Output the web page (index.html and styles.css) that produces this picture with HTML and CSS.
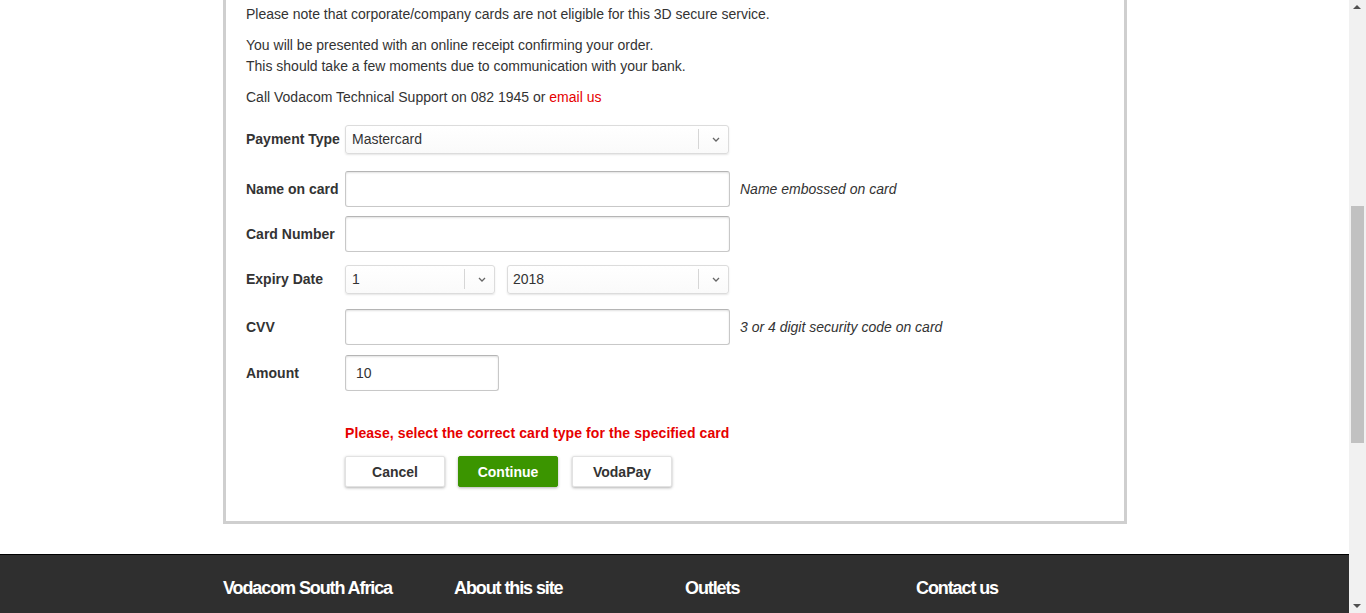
FILE: index.html
```html
<!DOCTYPE html>
<html lang="en">
<head>
<meta charset="utf-8">
<title>Vodacom payment</title>
<link rel="stylesheet" href="styles.css">
</head>
<body>
<div class="viewport">
  <div class="page">
    <div class="panel">
      <p>Please note that corporate/company cards are not eligible for this 3D secure service.</p>
      <p>You will be presented with an online receipt confirming your order.<br>This should take a few moments due to communication with your bank.</p>
      <p>Call Vodacom Technical Support on 082 1945 or <a class="link" href="#">email us</a></p>

      <form class="form">
        <div class="row row-payment">
          <label class="label">Payment Type</label>
          <div class="select select-wide">
            <span class="select-text">Mastercard</span>
            <span class="select-sep"></span>
            <svg class="chev" width="8" height="5" viewBox="0 0 8 5"><polyline points="1,1 4,4 7,1" fill="none" stroke="#666" stroke-width="1.3"/></svg>
          </div>
        </div>
        <div class="row row-tight">
          <label class="label">Name on card</label>
          <div class="input input-wide"></div>
          <span class="hint">Name embossed on card</span>
        </div>
        <div class="row row-tight">
          <label class="label">Card Number</label>
          <div class="input input-wide"></div>
        </div>
        <div class="row row-expiry">
          <label class="label">Expiry Date</label>
          <div class="select select-month">
            <span class="select-text">1</span>
            <span class="select-sep"></span>
            <svg class="chev" width="8" height="5" viewBox="0 0 8 5"><polyline points="1,1 4,4 7,1" fill="none" stroke="#666" stroke-width="1.3"/></svg>
          </div>
          <div class="select select-year">
            <span class="select-text select-text-year">2018</span>
            <span class="select-sep"></span>
            <svg class="chev" width="8" height="5" viewBox="0 0 8 5"><polyline points="1,1 4,4 7,1" fill="none" stroke="#666" stroke-width="1.3"/></svg>
          </div>
        </div>
        <div class="row">
          <label class="label">CVV</label>
          <div class="input input-wide"></div>
          <span class="hint">3 or 4 digit security code on card</span>
        </div>
        <div class="row">
          <label class="label">Amount</label>
          <div class="input input-amount">10</div>
        </div>

        <div class="error">Please, select the correct card type for the specified card</div>

        <div class="buttons">
          <button type="button" class="btn">Cancel</button>
          <button type="button" class="btn btn-primary">Continue</button>
          <button type="button" class="btn btn-last">VodaPay</button>
        </div>
      </form>
    </div>

    <footer class="footer">
      <div class="footer-inner">
        <h3 class="footer-title">Vodacom South Africa</h3>
        <h3 class="footer-title">About this site</h3>
        <h3 class="footer-title">Outlets</h3>
        <h3 class="footer-title">Contact us</h3>
      </div>
    </footer>
  </div>

  <div class="scrollbar">
    <div class="sb-arrow sb-up"></div>
    <div class="sb-track"><div class="sb-thumb"></div></div>
    <div class="sb-arrow sb-down"></div>
  </div>
</div>
</body>
</html>
```

FILE: styles.css
```css
* { box-sizing: border-box; }

html, body {
  margin: 0;
  padding: 0;
  height: 613px;
  overflow: hidden;
  background: #fff;
}

body {
  font-family: "Liberation Sans", Arial, sans-serif;
  font-size: 14px;
  color: #333;
}

.viewport {
  display: flex;
  width: 1366px;
  height: 613px;
}

.page {
  width: 1349px;
  height: 613px;
  overflow: hidden;
}

.panel {
  width: 904px;
  margin: 0 auto 0 223px;
  border: 3px solid #cfcfcf;
  border-top: none;
  padding: 4px 20px 34px 20px;
}

.panel p {
  margin: 0 0 10px 0;
  line-height: 21px;
}

.link {
  color: #e60000;
  text-decoration: none;
}

.form {
  margin: 0;
  padding-top: 3px;
}

.row {
  display: flex;
  align-items: center;
  height: 36px;
  margin-bottom: 10px;
}

.row-payment { margin-bottom: 14px; }
.row-tight { margin-bottom: 9px; }
.row-expiry { margin-bottom: 12px; }

.label {
  width: 99px;
  flex: none;
  font-weight: bold;
  color: #333;
}

.input {
  height: 36px;
  border: 1px solid #c8c8c8;
  border-top-color: #b5b5b5;
  border-radius: 3px;
  background: #fff;
  box-shadow: inset 0 1px 2px rgba(0,0,0,0.12);
  padding: 0 10px 0 10px;
  display: flex;
  align-items: center;
  color: #333;
}

.input-wide { width: 385px; }
.input-amount { width: 154px; }

.hint {
  margin-left: 10px;
  font-style: italic;
  color: #333;
}

.select {
  position: relative;
  height: 29px;
  border: 1px solid #dcdcdc;
  border-radius: 3px;
  background: linear-gradient(#fff, #fafafa);
  box-shadow: 0 1px 2px rgba(0,0,0,0.1);
  display: flex;
  align-items: center;
  padding-left: 6px;
}

.select-wide { width: 384px; }
.select-month { width: 150px; margin-right: 12px; }
.select-year { width: 222px; }

.select-text {
  flex: 1;
  color: #333;
}

.select-text-year { margin-left: -1px; }

.select-sep {
  width: 1px;
  height: 20px;
  background: #d6d6d6;
  margin-right: 13px;
}

.chev {
  margin-right: 8px;
  display: block;
}

.error {
  margin-left: 99px;
  margin-top: 32px;
  line-height: 20px;
  font-size: 14px;
  font-weight: bold;
  letter-spacing: 0.08px;
  color: #e60000;
}

.buttons {
  display: flex;
  gap: 13px;
  margin-left: 99px;
  margin-top: 13px;
}

.btn {
  width: 100px;
  height: 31px;
  border: 1px solid #e2e2e2;
  border-radius: 2px;
  background: #fff;
  box-shadow: 0 1px 3px rgba(0,0,0,0.3);
  font-family: "Liberation Sans", Arial, sans-serif;
  font-size: 14px;
  font-weight: bold;
  color: #333;
  padding: 0;
}

.btn-last { margin-left: 1px; }

.btn-primary {
  background: #3b9500;
  border-color: #3b9500;
  color: #fff;
}

.footer {
  margin-top: 30px;
  border-top: 1px solid #000;
  background: #2f2f2f;
  height: 100px;
}

.footer-inner {
  display: grid;
  grid-template-columns: repeat(4, 231px);
  padding: 22px 0 0 223px;
}

.footer-title {
  margin: 0;
  font-size: 18px;
  line-height: 22px;
  font-weight: bold;
  letter-spacing: -1.1px;
  color: #fff;
}

.scrollbar {
  width: 17px;
  height: 613px;
  background: #f1f1f1;
  display: flex;
  flex-direction: column;
}

.sb-arrow {
  height: 17px;
  flex: none;
  position: relative;
}

.sb-up::after, .sb-down::after {
  content: "";
  position: absolute;
  left: 4px;
  width: 0;
  height: 0;
  border-left: 4px solid transparent;
  border-right: 4px solid transparent;
}

.sb-up::after {
  top: 5px;
  border-bottom: 4px solid #505050;
}

.sb-down::after {
  top: 8px;
  border-top: 4px solid #505050;
}

.sb-track {
  flex: 1;
  padding-top: 189px;
}

.sb-thumb {
  width: 13px;
  height: 237px;
  margin-left: 2px;
  background: #c1c1c1;
}
```
